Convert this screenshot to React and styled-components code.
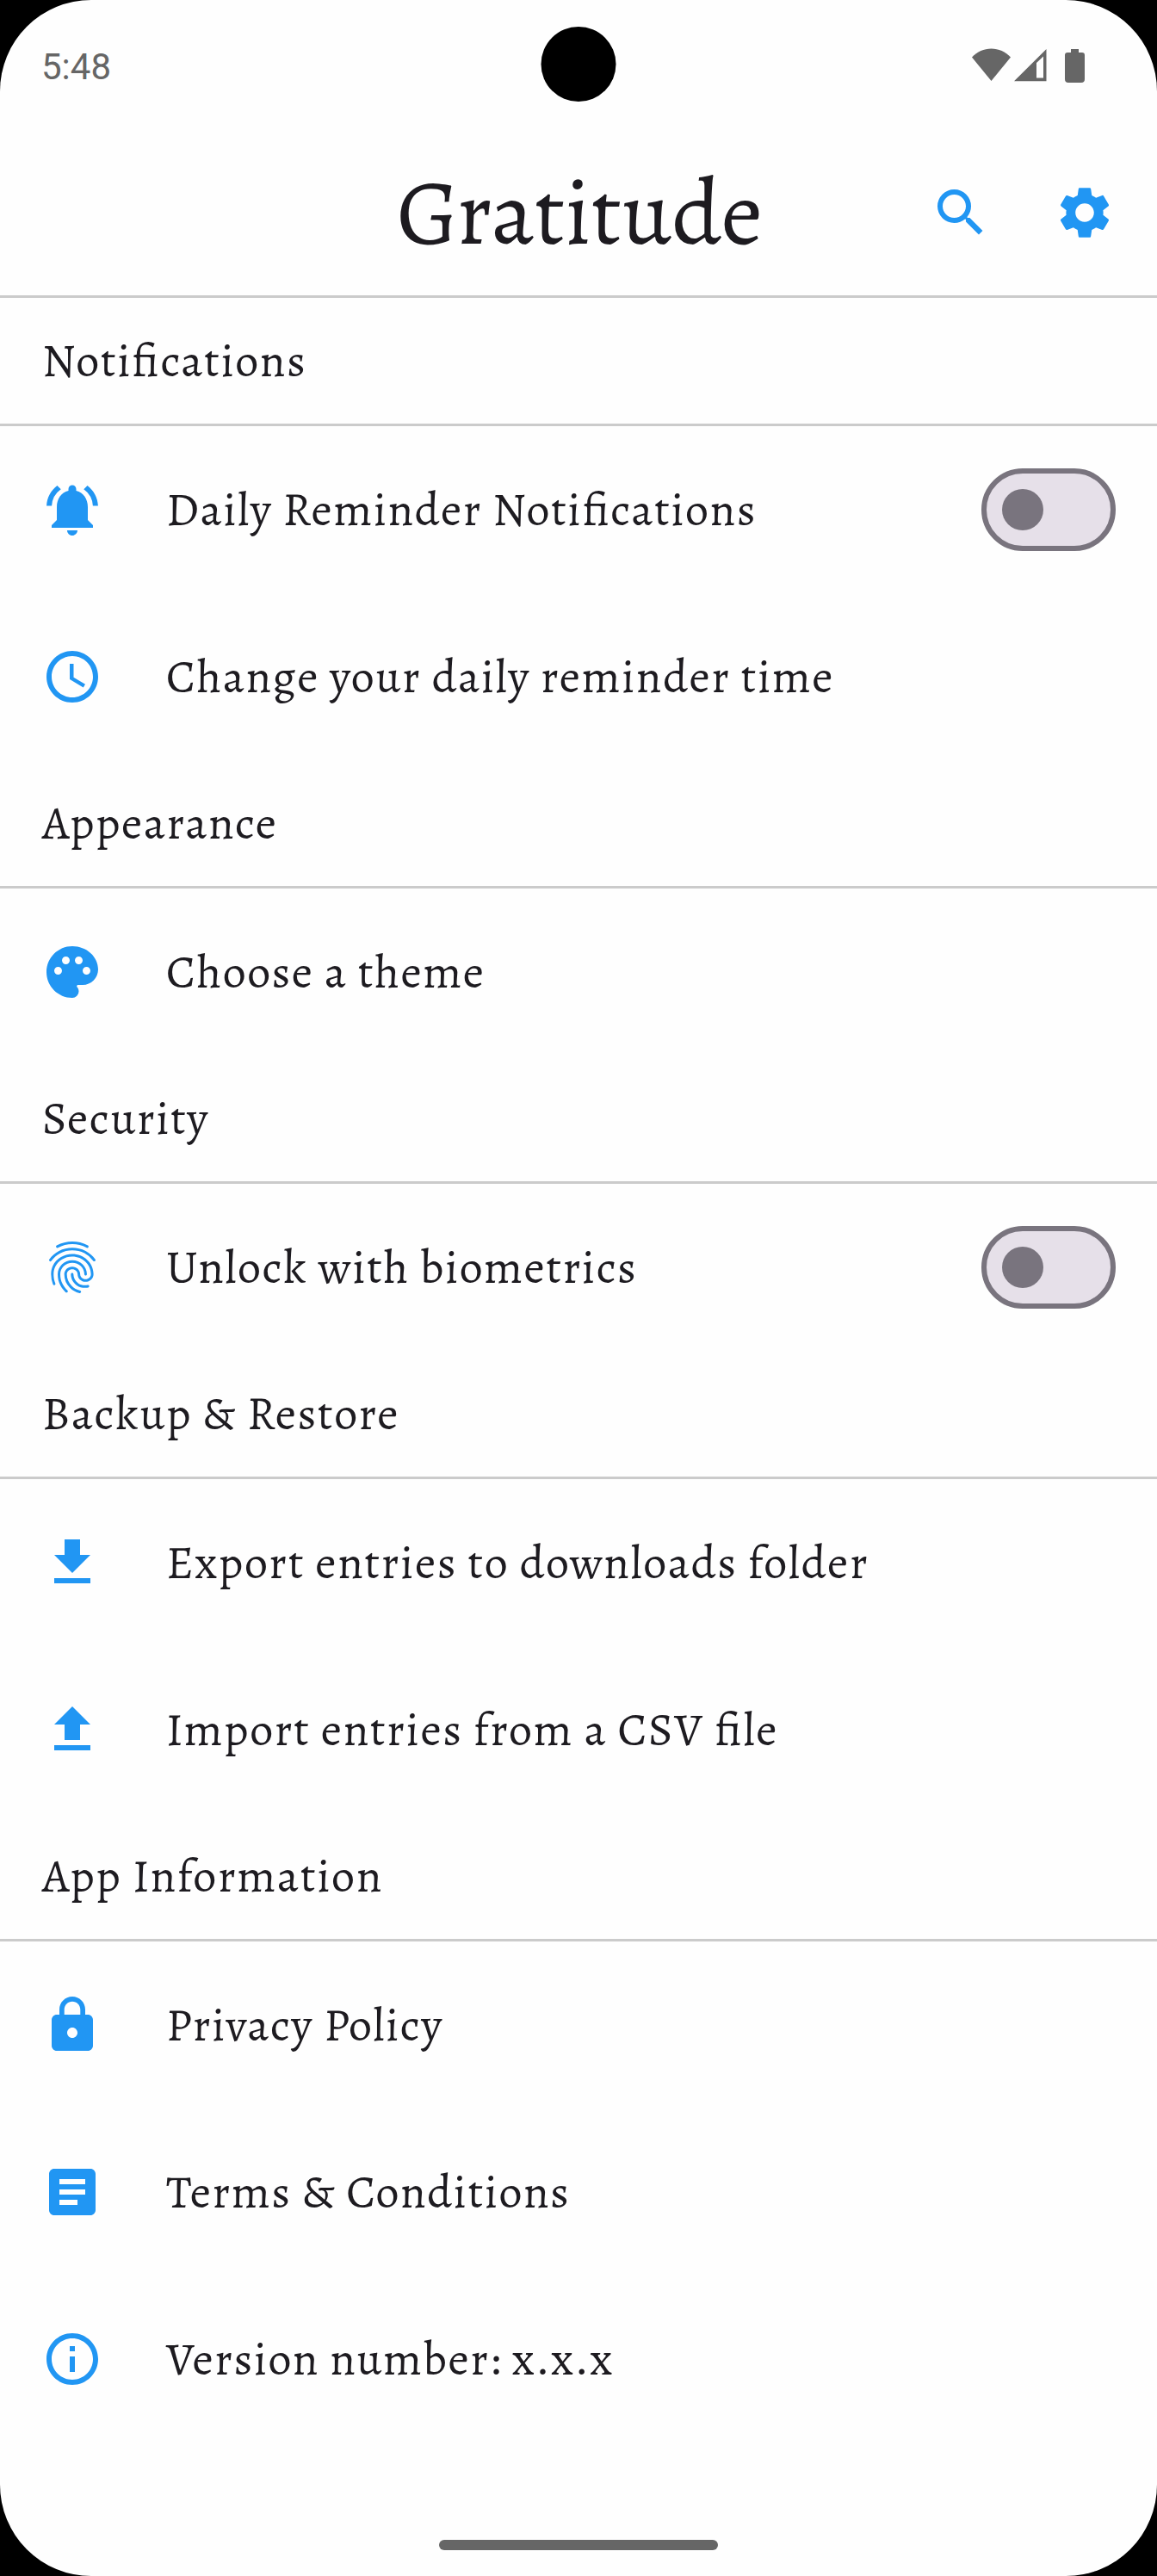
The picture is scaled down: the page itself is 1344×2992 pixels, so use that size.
import React from "react";
import styled, { createGlobalStyle } from "styled-components";
import {
  MdSearch,
  MdSettings,
  MdNotificationsActive,
  MdAccessTime,
  MdPalette,
  MdFingerprint,
  MdLock,
  MdArticle,
  MdInfoOutline,
} from "react-icons/md";

const GlobalStyle = createGlobalStyle`
  *, *::before, *::after { box-sizing: border-box; }
  html, body { margin: 0; padding: 0; background: #000; }
`;

const Screen = styled.div`
  position: relative;
  display: flex;
  flex-direction: column;
  width: 1344px;
  height: 2992px;
  overflow: hidden;
  border-radius: 106px;
  background: #fefefe;
  color: #1d1b20;
  font-family: "Alegreya", "Liberation Serif", serif;
`;

const StatusBar = styled.header`
  display: flex;
  justify-content: space-between;
  align-items: center;
  height: 151px;
  flex: none;
  padding: 0 84px 0 48px;
`;

const Clock = styled.time`
  font: 400 42px/50px Roboto, sans-serif;
  color: #666;
  padding-top: 5px;
`;

const StatusIcons = styled.svg`
  width: 131px;
  height: 40px;
  fill: #666;
`;

const Camera = styled.div`
  position: absolute;
  top: 31px;
  left: 50%;
  width: 87px;
  height: 87px;
  transform: translateX(-50%);
  border-radius: 50%;
  background: #000;
`;

const AppBar = styled.div`
  display: grid;
  grid-template-columns: 1fr auto 1fr;
  align-items: center;
  height: 195px;
  flex: none;
  padding: 0 48px;
  border-bottom: 3px solid #cbcbcb;
`;

const Title = styled.h1`
  grid-column: 2;
  margin: 0;
  padding-left: 3px;
  font-size: 107.5px;
  font-weight: 400;
  line-height: 120px;
`;

const Actions = styled.div`
  display: flex;
  justify-content: flex-end;
  gap: 72px;
`;

const IconButton = styled.button`
  display: flex;
  width: 72px;
  height: 72px;
  padding: 0;
  border: 0;
  background: none;
  color: #2196f3;

  svg {
    width: 72px;
    height: 72px;
  }
`;

const SectionHeader = styled.h2`
  display: flex;
  align-items: center;
  height: 149px;
  margin: 0;
  padding: 0 48px;
  border-bottom: 3px solid #cbcbcb;
  font-weight: 400;
`;

const Row = styled.div`
  display: flex;
  align-items: center;
  height: 194px;
  padding: 0 48px;
`;

const Leading = styled.span`
  display: flex;
  width: 72px;
  height: 72px;
  margin-right: 72px;
  color: #2196f3;

  svg {
    width: 72px;
    height: 72px;
  }
`;

const Label = styled.span`
  flex: 1;
  padding-left: 1px;
  font-size: 54px;
  line-height: 72px;
  letter-spacing: ${(p) => p.$tracking ?? 1.54}px;
  font-feature-settings: "liga" 1;
  white-space: nowrap;
`;

const Switch = styled.button`
  display: flex;
  align-items: center;
  width: 156px;
  height: 96px;
  padding: 0 18px;
  border: 6px solid #79747e;
  border-radius: 48px;
  background: #e6e0e9;
`;

const Thumb = styled.span`
  width: 48px;
  height: 48px;
  border-radius: 50%;
  background: #79747e;
`;

const HomeArea = styled.footer`
  display: flex;
  justify-content: center;
  margin-top: auto;
  padding-bottom: 30px;
`;

const HomeHandle = styled.div`
  width: 324px;
  height: 12px;
  border-radius: 6px;
  background: #666;
`;

const Glyph = ({ d }) => (
  <svg viewBox="0 0 24 24" fill="currentColor">
    <path d={d} />
  </svg>
);

const DownloadIcon = () => <Glyph d="M19 9h-4V3H9v6H5l7 7 7-7zM5 18v2h14v-2H5z" />;
const UploadIcon = () => <Glyph d="M9 16h6v-6h4l-7-7-7 7h4v6zm-4 2h14v2H5v-2z" />;

const sections = [
  {
    title: "Notifications",
    tracking: 1.6,
    items: [
      { icon: MdNotificationsActive, text: "Daily Reminder Notifications", toggle: true },
      { icon: MdAccessTime, text: "Change your daily reminder time" },
    ],
  },
  {
    title: "Appearance",
    items: [{ icon: MdPalette, text: "Choose a theme" }],
  },
  {
    title: "Security",
    items: [{ icon: MdFingerprint, text: "Unlock with biometrics", toggle: true }],
  },
  {
    title: "Backup & Restore",
    items: [
      { icon: DownloadIcon, text: "Export entries to downloads folder", tracking: 1.6 },
      { icon: UploadIcon, text: "Import entries from a CSV file", tracking: 1.62 },
    ],
  },
  {
    title: "App Information",
    tracking: 1.68,
    items: [
      { icon: MdLock, text: "Privacy Policy", tracking: 1.5 },
      { icon: MdArticle, text: "Terms & Conditions" },
      { icon: MdInfoOutline, text: "Version number: x.x.x" },
    ],
  },
];

export default function App() {
  return (
    <>
      <GlobalStyle />
      <Screen>
        <StatusBar>
          <Clock>5:48</Clock>
          <StatusIcons viewBox="0 0 131 40">
            <path d="M0 10.5C6 4 14 .5 22.5 .5S39 4 45 10.5L22.5 38z" />
            <path fillRule="evenodd" d="M49 38.3 86.5 1v37.3zM75 17v17.5h8V9.5z" />
            <path d="M115 1h9v4h4q3 0 3 3v28q0 4-4 4h-15q-4 0-4-4V8q0-3 3-3h4z" />
          </StatusIcons>
        </StatusBar>
        <Camera />
        <AppBar>
          <Title>Gratitude</Title>
          <Actions>
            <IconButton aria-label="Search">
              <MdSearch />
            </IconButton>
            <IconButton aria-label="Settings">
              <MdSettings />
            </IconButton>
          </Actions>
        </AppBar>
        <main>
          {sections.map((section) => (
            <section key={section.title}>
              <SectionHeader>
                <Label $tracking={section.tracking}>{section.title}</Label>
              </SectionHeader>
              {section.items.map(({ icon: Icon, text, tracking, toggle }) => (
                <Row key={text}>
                  <Leading>
                    <Icon />
                  </Leading>
                  <Label $tracking={tracking}>{text}</Label>
                  {toggle && (
                    <Switch role="switch" aria-checked="false" aria-label={text}>
                      <Thumb />
                    </Switch>
                  )}
                </Row>
              ))}
            </section>
          ))}
        </main>
        <HomeArea>
          <HomeHandle />
        </HomeArea>
      </Screen>
    </>
  );
}
